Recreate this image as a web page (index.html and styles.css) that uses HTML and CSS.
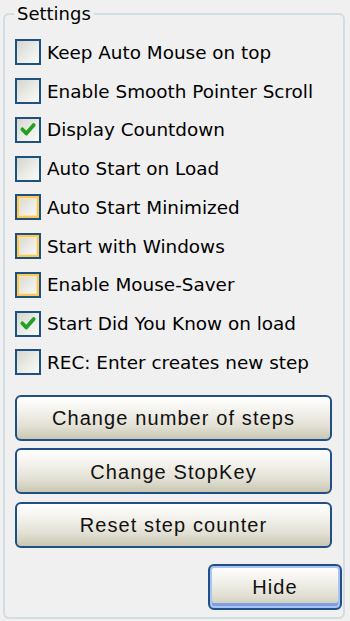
FILE: index.html
```html
<!DOCTYPE html>
<html lang="en">
<head>
    <meta charset="UTF-8">
    <title>Settings</title>
    <link rel="stylesheet" href="styles.css">
</head>
<body>
    <fieldset class="group">
        <legend>Settings</legend>

        <div class="opts">
            <label class="opt"><span class="box"></span>Keep Auto Mouse on top</label>
            <label class="opt"><span class="box"></span>Enable Smooth Pointer Scroll</label>
            <label class="opt"><span class="box"><svg viewBox="0 0 14 14"><path d="M3 6.5 L5.8 9.5 L11 3.5" /></svg></span>Display Countdown</label>
            <label class="opt"><span class="box"></span>Auto Start on Load</label>
            <label class="opt"><span class="box hot"></span>Auto Start Minimized</label>
            <label class="opt"><span class="box hot"></span>Start with Windows</label>
            <label class="opt"><span class="box hot"></span>Enable Mouse-Saver</label>
            <label class="opt"><span class="box"><svg viewBox="0 0 14 14"><path d="M3 6.5 L5.8 9.5 L11 3.5" /></svg></span>Start Did You Know on load</label>
            <label class="opt"><span class="box"></span>REC: Enter creates new step</label>
        </div>

        <div class="actions">
            <button class="btn">Change number of steps</button>
            <button class="btn">Change StopKey</button>
            <button class="btn">Reset step counter</button>
        </div>

        <div class="footer">
            <button class="btn btn-default">Hide</button>
        </div>
    </fieldset>
</body>
</html>
```
FILE: styles.css
```css
/* XP style settings panel, 2x */
body { margin: 0; background: #f0f0f0; font-family: Tahoma, "DejaVu Sans", "Liberation Sans", sans-serif; font-size: 18.4px; color: #000; }

.group { margin: 5px 5px 2px 3px; padding: 0 1px 6px 10px; border: 2px solid #d2dde3; border-radius: 6px; height: 614px; box-sizing: border-box; }
.group legend { padding: 0 3px; margin-left: -1px; line-height: 18px; font-size: 18px; }

.opts { margin-top: 10px; }
.opt { display: flex; align-items: center; height: 38.75px; white-space: nowrap; }

.box { width: 22px; height: 22px; border: 2px solid #1c5180; margin-right: 6px; flex: none;
       background: linear-gradient(135deg, #d6d6ce 0%, #ededea 60%, #fbfbfb 100%); position: relative; }
.box.hot { box-shadow: inset 0 0 0 2px #fbc85a, inset 0 0 0 3px #fde3a6; }
.box svg { position: absolute; left: 1px; top: 1px; width: 20px; height: 20px; }
.box svg path { fill: none; stroke: #21a121; stroke-width: 2.6; stroke-linecap: round; stroke-linejoin: round; }

.actions { margin-top: 13px; margin-right: 10px; display: flex; flex-direction: column; gap: 7.5px; }

.btn { font-family: "Liberation Sans", Arial, sans-serif; font-size: 20px; letter-spacing: 1.1px; color: #111; height: 46px;
       border: 2px solid #1f4f86; border-radius: 6px; padding: 2px 0 0;
       background: linear-gradient(#ffffff 0%, #f4f3ee 30%, #e2e0d4 70%, #c9c6b2 100%); }
.footer { display: flex; justify-content: flex-end; margin-top: 16px; }
.btn-default { width: 134px; box-shadow: inset 0 0 0 2px #a9c4f2, inset 0 -3px 0 2px #7b9fe0; }
```
